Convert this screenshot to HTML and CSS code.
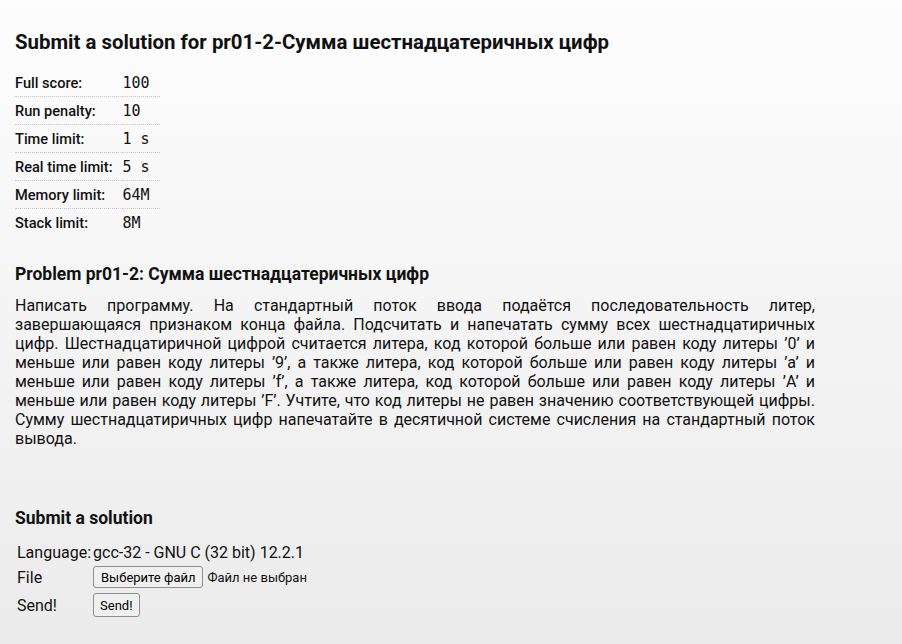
FILE: index.html
```html
<!DOCTYPE html>
<html lang="ru">
<head>
<meta charset="utf-8">
<title>Submit a solution</title>
<link rel="stylesheet" href="styles.css">
</head>
<body>
<div class="page">
  <h1 class="title">Submit a solution for pr01-2-Сумма шестнадцатеричных цифр</h1>
  <table class="limits">
    <tr><td class="lbl">Full score:</td><td class="val">100</td></tr>
    <tr><td class="lbl">Run penalty:</td><td class="val">10</td></tr>
    <tr><td class="lbl">Time limit:</td><td class="val">1 s</td></tr>
    <tr><td class="lbl">Real time limit:</td><td class="val">5 s</td></tr>
    <tr><td class="lbl">Memory limit:</td><td class="val">64M</td></tr>
    <tr><td class="lbl">Stack limit:</td><td class="val">8M</td></tr>
  </table>
  <h2 class="sub">Problem pr01-2: Сумма шестнадцатеричных цифр</h2>
  <p class="statement">Написать программу. На стандартный поток ввода подаётся последовательность литер, завершающаяся признаком конца файла. Подсчитать и напечатать сумму всех шестнадцатиричных цифр. Шестнадцатиричной цифрой считается литера, код которой больше или равен коду литеры ’0’ и меньше или равен коду литеры ’9’, а также литера, код которой больше или равен коду литеры ’a’ и меньше или равен коду литеры ’f’, а также литера, код которой больше или равен коду литеры ’A’ и меньше или равен коду литеры ’F’. Учтите, что код литеры не равен значению соответствующей цифры. Сумму шестнадцатиричных цифр напечатайте в десятичной системе счисления на стандартный поток вывода.</p>
  <h2 class="sub submit-head">Submit a solution</h2>
  <table class="form">
    <tr class="r1"><td>Language:</td><td>gcc-32 - GNU C (32 bit) 12.2.1</td></tr>
    <tr class="r2"><td>File</td><td><button class="btn" type="button">Выберите файл</button><span class="nofile">Файл не выбран</span></td></tr>
    <tr class="r3"><td>Send!</td><td><button class="btn send" type="button">Send!</button></td></tr>
  </table>
</div>
</body>
</html>
```
FILE: styles.css
```css
html {
  min-height: 100%;
  background: linear-gradient(to bottom, #fdfdfd 0%, #ebebeb 100%);
}
body {
  margin: 0;
  min-height: 644px;
  font-family: Roboto, "Noto Sans", sans-serif;
  color: #111;
}
.page {
  width: 800px;
  padding: 27px 15px 0 15px;
}
.title {
  font-size: 20.4px;
  font-weight: 700;
  margin: 0 0 12px 0;
  line-height: 30px;
}
.limits {
  border-collapse: collapse;
  font-size: 14.6px;
}
.limits td {
  height: 27px;
  padding: 0;
  border-bottom: 1px dotted #c8c8c8;
  vertical-align: middle;
}
.limits tr:last-child td {
  border-bottom: none;
}
.limits .lbl {
  font-weight: 500;
  padding-right: 10px;
}
.limits .val {
  font-family: "DejaVu Sans Mono", monospace;
  font-size: 15px;
  width: 37px;
}
.sub {
  font-size: 17.5px;
  font-weight: 700;
  margin: 26px 0 10px 0;
  line-height: 24px;
}
.statement {
  font-size: 16px;
  line-height: 19px;
  text-align: justify;
  margin: 0;
}
.submit-head {
  margin-top: 58px;
  margin-bottom: 9px;
}
.form {
  font-size: 16px;
  border-spacing: 2px;
}
.form td {
  padding: 0;
  vertical-align: middle;
}
.form .r1 td { height: 22px; }
.form .r2 td { height: 24px; }
.form .r3 td { height: 28px; }
.btn {
  font-family: Roboto, Arial, sans-serif;
  font-size: 13px;
  background: #f0f0f0;
  border: 1px solid #8f8f8f;
  border-radius: 3px;
  padding: 2px 7px;
  color: #000;
  height: 22px;
  vertical-align: middle;
}
.send {
  height: 24px;
  padding: 2px 6px;
}
.nofile {
  font-size: 13px;
  margin-left: 4px;
  vertical-align: middle;
}
```
